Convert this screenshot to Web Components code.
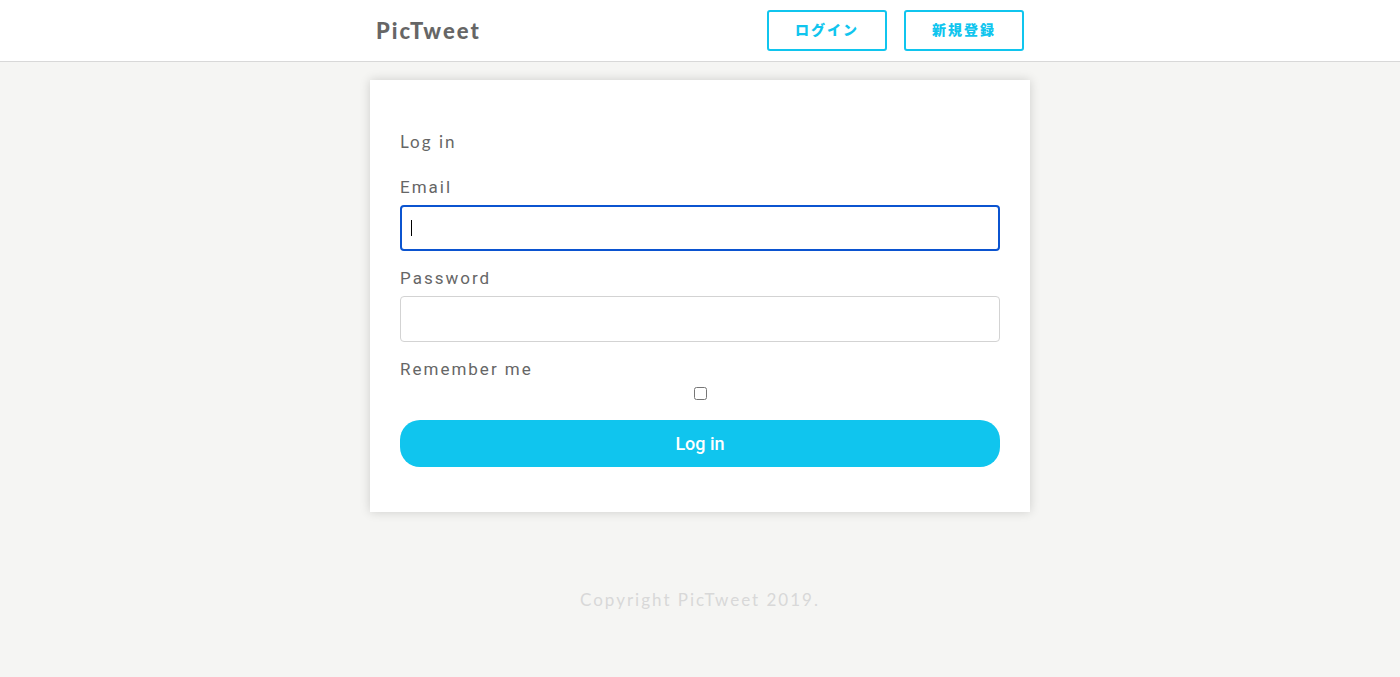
<!DOCTYPE html>
<html lang="ja">
<head>
<meta charset="utf-8">
<meta name="viewport" content="width=device-width, initial-scale=1">
<title>PicTweet</title>
<style>
body { margin: 0; min-height: 100vh; background: #f5f5f3; color: #666; font: 17px/24px Lato, "Noto Sans CJK JP", sans-serif; letter-spacing: 2px; }
</style>
</head>
<body>
<site-header>
  <nav-button href="#login">ログイン</nav-button>
  <nav-button href="#signup">新規登録</nav-button>
</site-header>
<login-card>
  <text-field label="Email" type="email" name="email" focused></text-field>
  <text-field label="Password" type="password" name="password"></text-field>
  <check-field label="Remember me" name="remember"></check-field>
  <submit-button>Log in</submit-button>
</login-card>
<site-footer>Copyright PicTweet 2019.</site-footer>
<script>
class BaseElement extends HTMLElement {
  render(html) {
    const t = document.createElement('template');
    t.innerHTML = '<style>*{box-sizing:border-box}:host{display:block}</style>' + html;
    this.attachShadow({ mode: 'open' }).append(t.content.cloneNode(true));
  }
}
customElements.define('site-header', class extends BaseElement {
  constructor() {
    super();
    this.render(`<style>
      header { background: #fff; border-bottom: 1px solid #d8d8d8; padding: 10px 0; }
      .inner { max-width: 660px; margin: auto; padding: 0 6px; display: flex; align-items: center; justify-content: space-between; }
      .logo { color: inherit; text-decoration: none; font-size: 22px; font-weight: 900; }
      nav { display: flex; gap: 17px; }
    </style>
    <header><div class="inner"><a class="logo" href="#">PicTweet</a><nav><slot></slot></nav></div></header>`);
  }
});
customElements.define('nav-button', class extends BaseElement {
  constructor() {
    super();
    this.render(`<style>
      a { display: block; width: 120px; padding: 7px 0 10px; border: 2px solid #10c5ee; border-radius: 3px; color: #10c5ee;
        font: 900 14px/20px "Noto Sans CJK JP", sans-serif; text-align: center; text-decoration: none; }
    </style><a href="${this.getAttribute('href')}"><slot></slot></a>`);
  }
});
customElements.define('login-card', class extends BaseElement {
  constructor() {
    super();
    this.render(`<style>
      main { max-width: 660px; margin: 18px auto 0; padding: 50px 30px 45px; background: #fff; box-shadow: 0 0 10px rgba(0,0,0,.16); }
      h1 { margin: 0 0 21px; font-size: 17px; line-height: 24px; font-weight: 400; }
      form { display: grid; gap: 15px; }
    </style><main><h1>Log in</h1><form><slot></slot></form></main>`);
  }
});
customElements.define('text-field', class extends BaseElement {
  constructor() {
    super();
    const focused = this.hasAttribute('focused');
    this.render(`<style>
      label { display: block; margin-bottom: 6px; font-family: Roboto, sans-serif; }
      .box { position: relative; }
      input { display: block; width: 100%; height: 46px; padding: 0 10px; border: 1px solid #d3d3d3; border-radius: 4px; background: #fff; font: 16px Roboto, sans-serif; color: #000; outline: none; }
      input.focused { border: 2px solid #0b54d0; caret-color: transparent; }
      .caret { position: absolute; left: 11px; top: 15px; width: 1px; height: 16px; background: #000; }
    </style>
    <label for="field">${this.getAttribute('label')}</label>
    <div class="box"><input id="field" class="${focused ? 'focused' : ''}" type="${this.getAttribute('type')}" name="${this.getAttribute('name')}">
    ${focused ? '<span class="caret" aria-hidden="true"></span>' : ''}</div>`);
  }
});
customElements.define('check-field', class extends BaseElement {
  constructor() {
    super();
    this.render(`<style>
      label { display: block; margin-bottom: 6px; font-family: Roboto, sans-serif; }
      input { display: block; width: 13px; height: 13px; margin: 0 auto 5px; }
    </style>
    <label for="check">${this.getAttribute('label')}</label>
    <input id="check" type="checkbox" name="${this.getAttribute('name')}">`);
  }
});
customElements.define('submit-button', class extends BaseElement {
  constructor() {
    super();
    this.render(`<style>
      button { display: block; width: 100%; height: 47px; border: 0; border-radius: 20px; background: #10c5ee; color: #fff; font: 500 18px Roboto, sans-serif; letter-spacing: normal; }
    </style><button type="button"><slot></slot></button>`);
  }
});
customElements.define('site-footer', class extends BaseElement {
  constructor() {
    super();
    this.render(`<style>
      footer { padding: 76px 0 65px; text-align: center; color: #d8d8d8; }
    </style><footer><slot></slot></footer>`);
  }
});
</script>
</body>
</html>
